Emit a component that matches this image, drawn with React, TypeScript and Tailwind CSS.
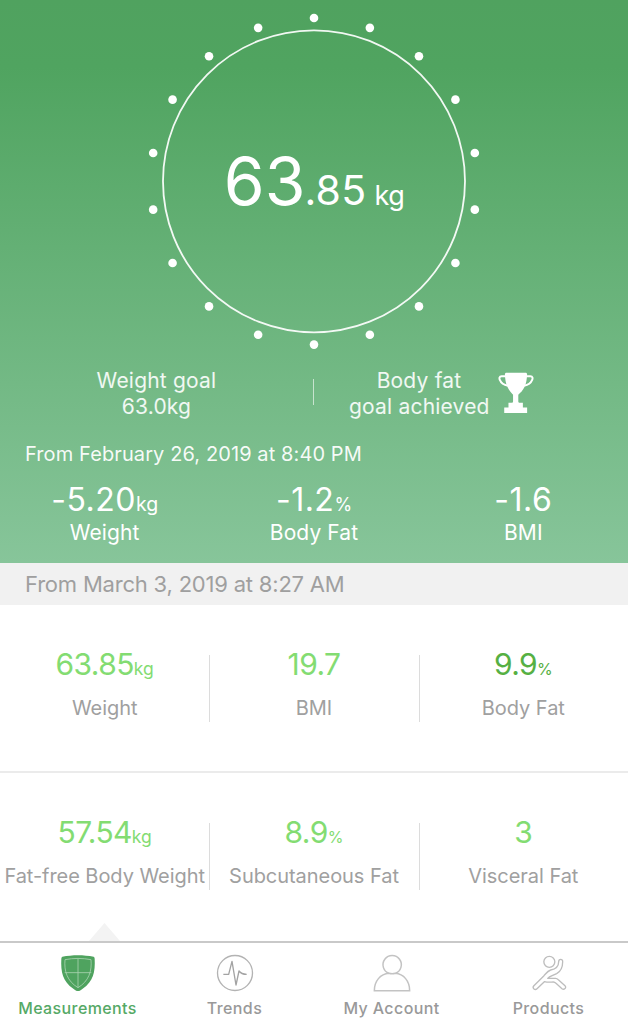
type Metric = {
  label: string;
  value: string;
  unit?: string;
  strong?: boolean;
};

const CHANGES: Metric[] = [
  { label: "Weight", value: "-5.20", unit: "kg" },
  { label: "Body Fat", value: "-1.2", unit: "%" },
  { label: "BMI", value: "-1.6" },
];

const ROWS: Metric[][] = [
  [
    { label: "Weight", value: "63.85", unit: "kg" },
    { label: "BMI", value: "19.7" },
    { label: "Body Fat", value: "9.9", unit: "%", strong: true },
  ],
  [
    { label: "Fat-free Body Weight", value: "57.54", unit: "kg" },
    { label: "Subcutaneous Fat", value: "8.9", unit: "%" },
    { label: "Visceral Fat", value: "3" },
  ],
];

// one dot every 20 degrees
const DOTS = Array.from({ length: 18 }, (_, i) => {
  const angle = (i * 20 * Math.PI) / 180;
  return { x: 314 + 163.3 * Math.sin(angle), y: 181.3 - 163.3 * Math.cos(angle) };
});

function WeightDial() {
  return (
    <div className="relative h-[366px]">
      <svg className="absolute inset-0" width="628" height="366" viewBox="0 0 628 366" fill="none">
        <circle cx="314" cy="181.3" r="151" stroke="white" strokeOpacity="0.92" strokeWidth="1.8" />
        {DOTS.map((dot, i) => (
          <circle key={i} cx={dot.x} cy={dot.y} r="4.3" fill="white" />
        ))}
      </svg>
      <div className="relative flex items-baseline justify-center pt-[141px] leading-[80px] text-white">
        <span className="text-[66px]">63</span>
        <span className="-ml-px text-[41px] tracking-[0.3px]">.85</span>
        <span className="ml-[8px] text-[27px] tracking-[-0.5px]">kg</span>
      </div>
    </div>
  );
}

function TrophyIcon() {
  return (
    <svg className="h-[42px] w-[36px]" viewBox="594 66 110 126" fill="none">
      <path
        d="M623 78h-18c-7 0-8 6-5 12 4 10 13 15 24 17M675 78h18c7 0 8 6 5 12-4 10-13 15-24 17"
        stroke="white"
        strokeWidth="6"
      />
      <path
        d="M620 67h58c3 0 5 2 5 5-1 14-2 27-8 39-5 10-12 18-19 23v21c0 3 2 4 4 4h10v14h13v17h-70v-17h13v-14h10c2 0 4-1 4-4v-21c-6-5-12-13-17-23-6-12-7-25-8-39 0-3 2-5 5-5Z"
        fill="white"
      />
    </svg>
  );
}

function Goals() {
  return (
    <div className="flex h-[56px] items-start text-center text-[21px] leading-[26px] tracking-[0.2px] text-white/90">
      <div className="mt-[2px] w-[313px]">
        Weight goal
        <br />
        63.0kg
      </div>
      <div className="mt-[13px] h-[26px] w-px shrink-0 bg-white/60" />
      <div className="flex flex-1 items-start pl-[35px]">
        <div className="mt-[2px] w-[140px] whitespace-nowrap">
          Body fat
          <br />
          goal achieved
        </div>
        <div className="mt-[6px] ml-[9px]">
          <TrophyIcon />
        </div>
      </div>
    </div>
  );
}

function MetricCell({ metric }: { metric: Metric }) {
  const unitSize = metric.unit === "%" ? "text-[16px]" : "text-[17.5px]";
  return (
    <div className="flex flex-col items-center whitespace-nowrap">
      <div className={`flex h-9 items-baseline leading-9 ${metric.strong ? "text-[#56b043]" : "text-[#83dc72]"}`}>
        <span className="text-[30px] tracking-[-0.6px]">{metric.value}</span>
        {metric.unit && <span className={unitSize}>{metric.unit}</span>}
      </div>
      <div className="mt-[12px] text-[20px] leading-7 tracking-[-0.05px] text-[#a0a0a0]">{metric.label}</div>
    </div>
  );
}

function ShieldIcon() {
  return (
    <svg className="size-10" viewBox="175 54 120 120" fill="none">
      <path
        d="M188 65c30-6 64-6 94 0 2 1 3 3 3 6 2 40-4 68-36 90-6 4-9 7-14 7s-8-3-14-7c-32-22-38-50-36-90 0-3 1-5 3-6Z"
        fill="#4fa35f"
      />
      <path
        d="M196 74c26-5 52-5 78 0 3 34-6 64-39 84-33-20-42-50-39-84ZM235 71v87M195 113h80"
        stroke="#a8d3b0"
        strokeWidth="2.5"
      />
    </svg>
  );
}

function TrendsIcon() {
  return (
    <svg className="size-10" viewBox="646 54 120 120" fill="none" stroke="#b3b3b3" strokeWidth="4">
      <circle cx="706" cy="114" r="52.5" />
      <path d="M671 118h16l10-39 12 71 9-42c5 7 10 10 23 10" stroke="#a3a3a3" strokeLinejoin="round" />
    </svg>
  );
}

function AccountIcon() {
  return (
    <svg className="size-10" viewBox="175 54 120 120" fill="none" stroke="#c3c3c3" strokeWidth="4.5">
      <path d="M226 115a27.5 27.5 0 1 1 19 0c25 2 43 23 43 52H182c0-29 18-50 44-52 6 2 13 2 19 0" />
    </svg>
  );
}

function ProductsIcon() {
  return (
    <svg className="size-10" viewBox="646 54 120 120" fill="none" stroke="#bdbdbd" strokeWidth="4" strokeLinejoin="round">
      <circle cx="707" cy="80.5" r="16.5" />
      <path d="M735 80c0-9 13-9 12 0 0 18-6 29-18 36-11 6-21 7-27 14h24c4 0 6 2 8 4l20 18c6 6-3 14-9 9l-18-16c-3-3-5-4-8-4-10 1-18 1-27-1l-22 21c-6 6-15-1-10-8l31-31c8-9 11-14 20-17 15-3 24-10 24-25Z" />
    </svg>
  );
}

const TABS = [
  { label: "Measurements", icon: ShieldIcon, active: true },
  { label: "Trends", icon: TrendsIcon },
  { label: "My Account", icon: AccountIcon },
  { label: "Products", icon: ProductsIcon },
];

export default function App() {
  return (
    <div className="flex h-[1024px] w-[628px] flex-col overflow-hidden bg-white font-['Inter','Liberation_Sans',sans-serif]">
      <section className="h-[563px] shrink-0 bg-[linear-gradient(180deg,#50a25f_0%,#50a460_12%,#87c59a_100%)]">
        <WeightDial />
        <Goals />
        <p className="mt-[18px] pl-[25px] text-[20px] leading-7 tracking-[0.1px] text-white/95">
          From February 26, 2019 at 8:40 PM
        </p>
        <div className="mt-[14px] grid grid-cols-3 text-white">
          {CHANGES.map((metric) => (
            <div key={metric.label} className="flex flex-col items-center">
              <div className="flex h-9 items-baseline leading-9">
                <span className="text-[32px] tracking-[0.5px]">{metric.value}</span>
                {metric.unit && (
                  <span className={metric.unit === "%" ? "text-[18px]" : "text-[19.5px]"}>{metric.unit}</span>
                )}
              </div>
              <div className="mt-px text-[21px] leading-7 tracking-[0.1px]">{metric.label}</div>
            </div>
          ))}
        </div>
      </section>

      <div className="h-[42px] shrink-0 bg-[#f1f1f1] pl-[25px] text-[22px] leading-[42px] tracking-[-0.2px] text-[#9f9f9f]">
        From March 3, 2019 at 8:27 AM
      </div>

      {ROWS.map((row, i) => (
        <section
          key={i}
          className={`relative grid h-[168px] shrink-0 grid-cols-3 pt-[41px] ${i === 0 ? "border-b-2 border-[#ebebeb]" : ""}`}
        >
          {row.map((metric, col) => (
            <div key={metric.label} className="relative">
              <MetricCell metric={metric} />
              {col < 2 && <div className="absolute top-[9px] -right-px h-[67px] w-px bg-[#dcdcdc]" />}
            </div>
          ))}
          {i === 1 && (
            <svg className="absolute bottom-0 left-[89px]" width="31" height="18" viewBox="0 0 31 18">
              <path d="M15.5 0 31 18H0Z" fill="#f3f3f3" />
            </svg>
          )}
        </section>
      ))}

      <nav className="grid flex-1 grid-cols-4 border-t-2 border-[#c9c9c9] pt-[10px]">
        {TABS.map((tab) => (
          <a key={tab.label} className="flex flex-col items-center pr-[2px]">
            <tab.icon />
            <span
              className={`mt-[4px] text-[16px] leading-[22px] font-medium tracking-[0.4px] ${tab.active ? "text-[#55a966]" : "text-[#999999]"}`}
            >
              {tab.label}
            </span>
          </a>
        ))}
      </nav>
    </div>
  );
}
